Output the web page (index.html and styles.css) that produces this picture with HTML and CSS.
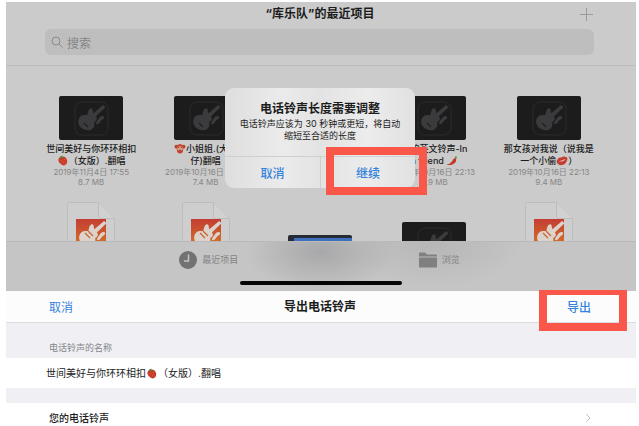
FILE: index.html
```html
<!DOCTYPE html>
<html lang="zh-CN">
<head>
<meta charset="utf-8">
<meta name="viewport" content="width=device-width, initial-scale=1">
<title>导出电话铃声</title>
<link rel="stylesheet" href="styles.css">
</head>
<body>
<svg class="defs" aria-hidden="true">
  <symbol id="guitar" viewBox="0 0 30 30">
    <path d="M27 2 29.500 4.500 19.500 14C21.500 16 20.500 18.500 18 19.500C17.500 21 18.500 22 17.500 24.500C15.500 28.500 10 29.500 5.500 26.500C1 23.500 0 18.500 2.500 15C4.500 12.300 7.500 12.500 10.500 12.500C11.500 10.500 11.500 6 14.500 5.500C17 5.500 15.800 8.500 17 10.500Z"/>
    <path d="M19.500 21.500C20 18.500 22 17.500 23 15.500 24 13.500 27.500 12.500 28 14.500 28.300 17 25 17.500 24 19.500 22.500 21.500 21.500 22.500 19.500 21.500Z"/>
  </symbol>
  <symbol id="session" viewBox="0 0 64 44">
    <rect width="64" height="44" rx="2" fill="#1c1c1d"/>
    <rect x="16" y="6" width="33" height="33" rx="7" fill="none" stroke="#2b2b2c"/>
    <use href="#guitar" x="18" y="7" width="29" height="29" fill="#3b3b3d"/>
    <path d="m25 27 4 4" stroke="#222" stroke-width="1.500"/>
  </symbol>
  <symbol id="document" viewBox="0 0 48 64">
    <path d="M2.500.5H31.500L47.500 16.500V63.500H.5V2.500Q.5.5 2.500.5Z" fill="#cecece" stroke="#bdbdbd"/>
    <path d="M31.500.5V14.500Q31.500 16.500 33.500 16.500H47.500" fill="#d1d1d1" stroke="#bdbdbd"/>
    <rect x="9" y="17" width="30" height="30" fill="url(#warm)"/>
    <use href="#guitar" x="11" y="17" width="29" height="29" fill="#ddd3cd"/>
    <path d="m21 29 5 5m-8-3 5 5" stroke="#c9632d" stroke-width="1.200"/>
  </symbol>
  <symbol id="strawberry" viewBox="0 0 12 12">
    <path d="M3 2.500C6 .5 10 2.500 10.500 6S9 11 7 11.500C4 11 .5 8 1 5Q1.300 3 3 2.500Z" fill="#c83d2a"/>
    <path d="m2 3.500 1-2L5.500.5 5 2 7 2.500 4.500 3.500Z" fill="#607d31"/>
    <path d="M4 6h1m2-1h1M6 8h1m1 1h1" stroke="#d96a4c"/>
  </symbol>
  <linearGradient id="warm" x2="0" y2="1"><stop stop-color="#c43d34"/><stop offset="1" stop-color="#d57a25"/></linearGradient>
</svg>

<main class="page">
  <section class="browser">
    <header class="browser-head">
      <h1 class="title">“库乐队”的最近项目</h1>
      <button class="add" aria-label="添加"><svg viewBox="0 0 13 13"><path d="M6.500 0v13M0 6.500h13"/></svg></button>
    </header>
    <label class="search">
      <svg viewBox="0 0 12 12" aria-hidden="true"><circle cx="5" cy="5" r="4"/><path d="m8 8 3.500 3.500"/></svg>
      <input type="search" placeholder="搜索" aria-label="搜索">
    </label>

    <div class="files">
      <article class="file">
        <svg class="session"><use href="#session"/></svg>
        <h2>世间美好与你环环相扣<br><svg class="emoji"><use href="#strawberry"/></svg>（女版）.翻唱</h2>
        <p>2019年11月4日 17:55<br>8.7 MB</p>
      </article>
      <article class="file">
        <svg class="session"><use href="#session"/></svg>
        <h2><svg class="emoji" viewBox="0 0 12 12"><circle cx="2" cy="4" r="2" fill="#b8432f"/><circle cx="10" cy="4" r="2" fill="#b8432f"/><path d="M2 4Q3 1 6 1t4 3L9 10q-3 3-6 0Z" fill="#c4452f"/><path d="M3 5q3-3 6 0v2q-3 3-6 0Z" fill="#dfa083"/><path d="M4 5h1m2 0h1M5 8h2" stroke="#732c23"/></svg>小姐姐.(大田<br>仔)翻唱</h2>
        <p>2019年10月16日 22:13<br>7.4 MB</p>
      </article>
      <div class="file"></div>
      <article class="file">
        <svg class="session"><use href="#session"/></svg>
        <h2>我的英文铃声-In<br>h friend <svg class="emoji" viewBox="0 0 12 12"><path d="M10 3q2 5-3 7-4 2-7 0 4 0 6-3 1-3 4-4Z" fill="#c5392b"/><path d="m9 4 1-3 1 .5L11 4Z" fill="#607d31"/></svg></h2>
        <p>2019年10月16日 22:13<br>6.9 MB</p>
      </article>
      <article class="file">
        <svg class="session"><use href="#session"/></svg>
        <h2>那女孩对我说（说我是<br>一个小偷<svg class="emoji" viewBox="0 0 12 12"><path d="M0 7Q2 2 5 3q1-1 2-1 1-1 2 0 3 0 3 2-1 6-6 7-4 1-6-4Z" fill="#c33c30"/><path d="M2 7q4-1 8-3-2 4-8 3Z" fill="#e6b0a4"/></svg>）</h2>
        <p>2019年10月16日 22:13<br>9.4 MB</p>
      </article>
    </div>
    <div class="files files-next">
      <div class="file"><svg class="document"><use href="#document"/></svg></div>
      <div class="file"><svg class="document"><use href="#document"/></svg></div>
      <div class="file"><div class="screenshot"></div></div>
      <div class="file"><svg class="session"><use href="#session"/></svg></div>
      <div class="file"><svg class="document"><use href="#document"/></svg></div>
    </div>

    <nav class="tabs">
      <div class="tab-list">
        <button class="tab tab-recent"><svg viewBox="0 0 18 18"><circle cx="9" cy="9" r="9" fill="#727272"/><path d="M9.500 3.500V10H5" fill="none" stroke="#c4c4c4" stroke-width="1.500"/></svg>最近项目</button>
        <button class="tab tab-browse"><svg viewBox="0 0 18 18"><path d="M0 2.500Q0 1.500 1 1.500H6L8 3.500H17Q18 3.500 18 4.500V5.500H0ZM0 6.500H18V15.500Q18 16.500 17 16.500H1Q0 16.500 0 15.500Z" fill="#808080"/></svg>浏览</button>
      </div>
      <div class="home-bar"></div>
    </nav>

    <div class="alert" role="alertdialog" aria-labelledby="alert-title">
      <div class="alert-text">
        <h2 id="alert-title">电话铃声长度需要调整</h2>
        <p>电话铃声应该为 30 秒钟或更短，将自动<br>缩短至合适的长度</p>
      </div>
      <div class="alert-actions">
        <button>取消</button>
        <button class="confirm">继续</button>
      </div>
    </div>
  </section>

  <section class="export">
    <header class="export-head">
      <button>取消</button>
      <h1 class="title">导出电话铃声</h1>
      <button class="export-button">导出</button>
    </header>
    <div class="caption" id="name-label">电话铃声的名称</div>
    <div class="name-row">
      <div class="name-text" role="textbox" aria-labelledby="name-label" contenteditable="true">世间美好与你环环相扣<svg class="emoji"><use href="#strawberry"/></svg>（女版）.翻唱</div>
    </div>
    <a class="ringtone" href="#ringtones">您的电话铃声<svg viewBox="0 0 5 8"><path d="m.5.5 3.500 3.500-3.500 3.500"/></svg></a>
  </section>
</main>
</body>
</html>
```
FILE: styles.css
```css
* { box-sizing: border-box; }

body {
  margin: 0;
  background: #fff;
  color: #1c1c1c;
  font-family: Inter, "Noto Sans CJK SC", sans-serif;
  overflow: hidden;
}

h1, h2, p { margin: 0; }

button {
  padding: 0;
  border: 0;
  background: none;
  font: inherit;
  color: #3482da;
}

.defs { position: absolute; width: 0; height: 0; }

.page { padding: 2px 3px 0 6px; }

.title { font-size: 12px; line-height: 24px; font-weight: 700; }

.emoji { width: 12px; height: 11px; vertical-align: -2px; }

/* File browser */
.browser {
  position: relative;
  overflow: hidden;
  background: #cbcbcb;
}

.browser-head {
  display: grid;
  grid-template-columns: 1fr auto 1fr;
  padding: 0 43px 0 41px;
}

.browser-head .title { grid-column: 2; }

.add { display: flex; align-items: center; justify-content: flex-end; }
.add svg { width: 13px; height: 13px; stroke: #9b9b9b; }

.search {
  display: flex;
  align-items: center;
  gap: 4px;
  height: 26px;
  margin: 3px 42px 10px 39px;
  padding: 0 6px;
  border-radius: 6px;
  background: #bebebe;
}

.search svg { width: 12px; height: 12px; fill: none; stroke: #8b8b8b; }

.search input {
  flex: 1;
  min-width: 0;
  padding: 0;
  border: 0;
  outline: 0;
  background: none;
  font: 12px "Noto Sans CJK SC", sans-serif;
}

.search input::placeholder { color: #868686; opacity: 1; }

.files {
  display: grid;
  grid-template-columns: repeat(5, 1fr);
  padding: 30px 30px 0 28px;
  border-top: 1px solid #bdbdbd;
}

.file {
  display: flex;
  flex-direction: column;
  align-items: center;
  justify-content: flex-end;
  text-align: center;
  white-space: nowrap;
}

.session { width: 64px; height: 44px; }
.document { width: 48px; height: 64px; }

.file h2 { margin-top: 3px; font-size: 9px; line-height: 12px; font-weight: 500; }
.file p { font-size: 8px; line-height: 10px; color: #868686; }

.files-next {
  height: 39px;
  padding-top: 0;
  margin-top: 15px;
  border: 0;
  grid-template-rows: 64px;
}

.screenshot {
  width: 64px;
  height: 31px;
  border: solid #262c35;
  border-width: 3px 0 0 6px;
  border-radius: 2px;
  background: #3d70bd;
}

.tabs {
  position: relative;
  height: 50px;
  padding-top: 9px;
  border-top: 1px solid #b9b9b9;
  background:
    radial-gradient(ellipse 75px 40px at 50% 10px, #a8a8aa, #a8a8aa00),
    radial-gradient(ellipse 90px 46px at 68% 0, #b6b6b6, #b6b6b600),
    #c5c5c5;
}

.tab-list { display: grid; grid-template-columns: 1fr 1fr; height: 18px; }

.tab {
  display: flex;
  align-items: center;
  gap: 5px;
  font-size: 9px;
  line-height: 18px;
  color: #838383;
}

.tab svg { width: 18px; height: 18px; }
.tab-recent { margin-left: 55%; }
.tab-browse { margin-left: 31%; }

.home-bar {
  width: 162px;
  height: 4px;
  margin: 12px auto 0;
  border-radius: 2px;
  background: #050505;
}

/* Alert over the file list */
.alert {
  position: absolute;
  top: 86px;
  left: calc(50% - 96px);
  width: 190px;
  border-radius: 9px;
  background: linear-gradient(90deg, #dedede, #ebebeb 30%, #e3e3e3 50%, #ececec 75%, #e1e1e1);
  text-align: center;
}

.alert-text { padding: 12px 8px 14px; }
.alert h2 { font-size: 12px; line-height: 18px; font-weight: 700; }
.alert p { font-size: 9px; line-height: 12px; white-space: nowrap; }

.alert-actions {
  display: grid;
  grid-template-columns: 1fr 1fr;
  height: 32px;
  border-top: 1px solid #cfcfcf;
  font-size: 12px;
  font-weight: 500;
}

.alert-actions button + button { border-left: 1px solid #cfcfcf; }

.confirm, .export-button { position: relative; }

.confirm::after, .export-button::after {
  content: "";
  position: absolute;
  border: 8px solid #f9574a;
}

.confirm::after { inset: -10px -12px -7px 5px; }

/* Export sheet */
.export { background: #efeff4; }

.export-head {
  display: grid;
  grid-template-columns: 1fr auto 1fr;
  align-items: center;
  height: 32px;
  padding: 0 45px 0 43px;
  border-bottom: 1px solid #dcdce0;
  background: #fcfcfd;
  font-size: 12px;
}

.export-head button { justify-self: start; }
.export-head .export-button { justify-self: end; font-weight: 500; }
.export-button::after { inset: -8px -36px -16px -28px; border-top-width: 5px; }

.caption {
  display: block;
  padding: 18px 43px 3px;
  font-size: 9px;
  line-height: 14px;
  color: #85858a;
}

.name-row {
  padding: 0 40px;
  background: #fff;
}

.name-text { font-size: 10px; line-height: 30px; outline: 0; }

.ringtone {
  display: flex;
  align-items: center;
  justify-content: space-between;
  margin-top: 15px;
  padding: 0 45px 0 43px;
  background: #fff;
  color: inherit;
  font-size: 10px;
  line-height: 30px;
  font-weight: 500;
  text-decoration: none;
}

.ringtone svg { width: 5px; height: 8px; fill: none; stroke: #bcbcc0; }
```
